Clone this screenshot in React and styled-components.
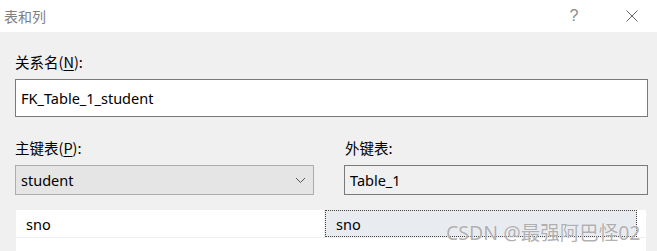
import React from 'react';
import styled, { createGlobalStyle } from 'styled-components';

const GlobalStyle = createGlobalStyle`
  html, body {
    margin: 0;
    padding: 0;
    background: #f0f0f0;
  }
  body {
    font-family: "Noto Sans", "Noto Sans CJK SC", sans-serif;
    font-size: 14.5px;
    color: #000;
  }
`;

const Window = styled.div`
  width: 657px;
  height: 251px;
  display: flex;
  flex-direction: column;
  position: relative;
  overflow: hidden;
  background: #f0f0f0;
`;

const TitleBar = styled.div`
  height: 32px;
  flex: none;
  background: #fff;
  display: flex;
  align-items: center;
  padding-left: 4px;
  color: #808080;
  font-size: 14px;
  font-family: "Noto Sans CJK SC", sans-serif;
`;

const Title = styled.div`
  flex: 1;
  line-height: 20px;
`;

const TitleButton = styled.div`
  width: 46px;
  height: 32px;
  display: flex;
  align-items: center;
  justify-content: center;
  color: #8a8a8a;
  font-size: 16px;
  font-family: "Liberation Sans", sans-serif;
  margin-right: ${props => props.gap || 0}px;
`;

const Body = styled.div`
  flex: 1;
  padding: 20px 9px 0 15px;
  display: flex;
  flex-direction: column;
`;

const Label = styled.div`
  line-height: 20px;
  height: 20px;
  margin-left: ${props => props.indent || 0}px;
  font-family: "Noto Sans CJK SC", sans-serif;
  u {
    text-decoration: underline;
    text-underline-offset: 2px;
  }
`;

const TextBox = styled.div`
  margin-top: 7px;
  box-sizing: border-box;
  border: 1px solid #7a7a7a;
  background: ${props => props.readOnly ? '#f0f0f0' : '#fff'};
  padding: 0 5px;
  display: flex;
  align-items: center;
  height: ${props => props.h}px;
`;

const Columns = styled.div`
  margin-top: 21px;
  display: grid;
  grid-template-columns: 299px 304px;
  column-gap: 30px;
`;

const Field = styled.div`
  display: flex;
  flex-direction: column;
`;

const Select = styled.div`
  margin-top: 7px;
  height: 30px;
  box-sizing: border-box;
  border: 1px solid #adadad;
  background: #e5e5e5;
  display: flex;
  align-items: center;
  padding: 0 7px 0 5px;
`;

const SelectText = styled.div`
  flex: 1;
`;

const Grid = styled.div`
  margin-top: 15px;
  margin-left: 1px;
  margin-right: 2px;
  background: #fff;
  flex: 1;
`;

const GridRow = styled.div`
  display: grid;
  grid-template-columns: 309px 312px 9px;
  height: 27px;
  border-bottom: 1px solid #f0f0f0;
`;

const Cell = styled.div`
  display: flex;
  align-items: center;
  padding-left: 10px;
  box-sizing: border-box;
  border-right: ${props => props.last ? 'none' : '1px solid #f0f0f0'};
  ${props => props.selected && `
    background: #e8ecf1;
    border: 1px dotted #444;
  `}
`;

const Watermark = styled.div`
  position: absolute;
  left: 446px;
  top: 220px;
  font-size: 19.5px;
  line-height: 26px;
  color: rgba(150, 150, 150, 0.75);
  font-family: "Noto Sans", "Noto Sans CJK SC", sans-serif;
  text-shadow: 0 0 1px #fff;
  pointer-events: none;
`;

const Chevron = () => (
  <svg width="11" height="7" viewBox="0 0 11 7">
    <path d="M1 1 L5.5 5.5 L10 1" fill="none" stroke="#555" strokeWidth="1" />
  </svg>
);

const CloseIcon = () => (
  <svg width="12" height="12" viewBox="0 0 12 12">
    <path d="M0.5 0.5 L11.5 11.5 M11.5 0.5 L0.5 11.5" stroke="#666" strokeWidth="1" />
  </svg>
);

export default function App() {
  return (
    <Window>
      <GlobalStyle />
      <TitleBar>
        <Title>表和列</Title>
        <TitleButton gap={12}>?</TitleButton>
        <TitleButton gap={2}><CloseIcon /></TitleButton>
      </TitleBar>
      <Body>
        <Label>关系名(<u>N</u>):</Label>
        <TextBox h={38}>FK_Table_1_student</TextBox>
        <Columns>
          <Field>
            <Label>主键表(<u>P</u>):</Label>
            <Select>
              <SelectText>student</SelectText>
              <Chevron />
            </Select>
          </Field>
          <Field>
            <Label indent={1}>外键表:</Label>
            <TextBox h={30} readOnly>Table_1</TextBox>
          </Field>
        </Columns>
        <Grid>
          <GridRow>
            <Cell>sno</Cell>
            <Cell selected>sno</Cell>
            <Cell last />
          </GridRow>
        </Grid>
      </Body>
      <Watermark>CSDN @最强阿巴怪02</Watermark>
    </Window>
  );
}
